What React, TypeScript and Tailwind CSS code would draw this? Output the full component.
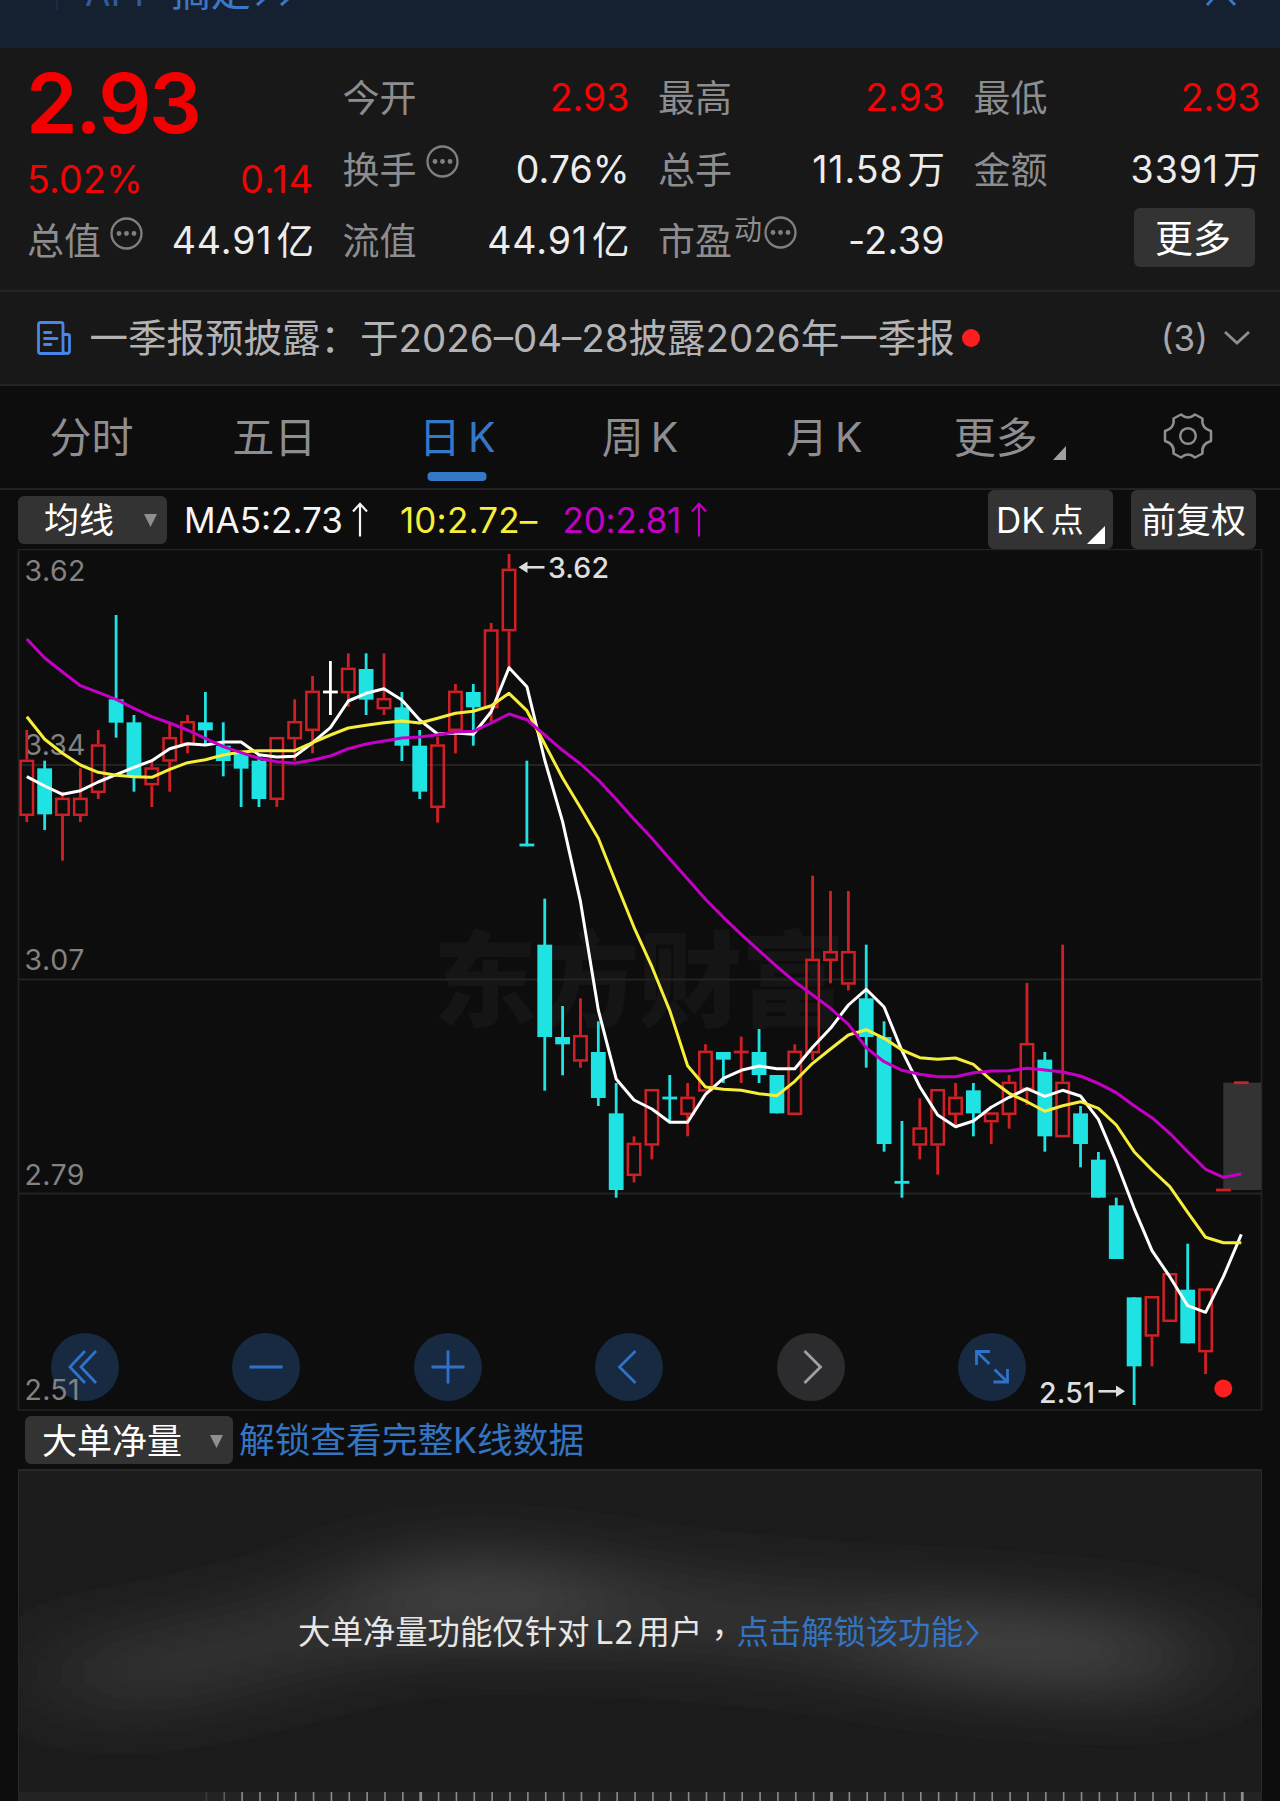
import type { ReactNode } from "react";

type Kind = "R" | "C" | "W";
/** kind, high, body top, body bottom, low (chart y units) */
type Candle = [Kind, number, number, number, number];

const STEP = 17.86;
const X0 = 26.8;
const px = (i: number) => X0 + STEP * i;

const scale = (base: number, rows: Candle[]): Candle[] =>
  rows.map(([k, h, t, b, l]) => [k, base + h / 3, base + t / 3, base + b / 3, base + l / 3]);

const candles: Candle[] = [
  ...scale(540, [
    ["R", 570, 659, 828, 846], ["C", 662, 685, 823, 870], ["R", 755, 773, 828, 962], ["R", 685, 773, 828, 846],
    ["R", 570, 613, 759, 777], ["C", 225, 478, 548, 593], ["C", 525, 547, 708, 755], ["R", 665, 682, 736, 801],
    ["R", 548, 591, 665, 755], ["R", 525, 543, 615, 640], ["C", 456, 547, 571, 615], ["C", 547, 617, 663, 709],
    ["C", 640, 640, 686, 801], ["C", 640, 662, 777, 801], ["R", 591, 591, 780, 801], ["R", 478, 543, 598, 662],
    ["R", 408, 452, 573, 640], ["W", 363, 456, 456, 525], ["R", 340, 383, 460, 500], ["C", 340, 387, 479, 525],
    ["R", 340, 474, 508, 525], ["C", 456, 502, 617, 663], ["C", 570, 617, 755, 777], ["R", 590, 613, 804, 848],
    ["R", 432, 452, 573, 640], ["C", 432, 456, 502, 617], ["R", 249, 268, 505, 545], ["R", 42, 86, 274, 385],
    ["C", 662, 915, 915, 919],
  ]),
  ...scale(860, [
    ["C", 116, 254, 531, 692], ["C", 438, 531, 553, 646], ["R", 415, 525, 605, 623], ["C", 484, 576, 714, 738],
    ["C", 669, 760, 990, 1013], ["R", 829, 848, 948, 967], ["R", 687, 687, 857, 898], ["C", 645, 714, 714, 785],
    ["R", 669, 710, 765, 829], ["R", 553, 572, 695, 695], ["C", 576, 576, 599, 669], ["R", 530, 576, 576, 669],
    ["C", 507, 576, 645, 669], ["C", 645, 645, 760, 760], ["R", 553, 572, 765, 765], ["R", 47, 296, 580, 600],
    ["R", 93, 273, 303, 370], ["R", 93, 273, 374, 391], ["C", 254, 415, 531, 623], ["C", 484, 531, 852, 875],
    ["C", 783, 967, 967, 1013], ["R", 715, 802, 857, 898], ["R", 687, 687, 857, 944], ["R", 669, 710, 765, 800],
    ["C", 669, 691, 760, 829], ["R", 757, 757, 787, 852], ["R", 645, 665, 765, 806], ["R", 369, 549, 690, 735],
    ["C", 576, 599, 829, 875], ["R", 254, 665, 832, 832], ["C", 738, 760, 852, 922], ["C", 876, 899, 1013, 1013],
  ]),
  ...scale(1160, [
    ["C", 113, 136, 297, 297], ["C", 412, 412, 619, 735], ["R", 408, 408, 530, 619], ["R", 339, 339, 486, 486],
    ["C", 251, 389, 550, 550], ["R", 385, 385, 577, 642], ["R", 90, 90, 90, 90], ["R", -232, -232, -232, -232],
  ]),
];

const line = (parts: [number, number[]][]) =>
  parts
    .flatMap(([base, ys]) => ys.map((y) => base + y / 3))
    .map((y, i) => `${px(i).toFixed(1)},${y.toFixed(1)}`)
    .join(" ");

const ma5 = line([
  [540, [710, 738, 763, 752, 726, 704, 682, 662, 626, 611, 615, 606, 606, 644, 651, 649, 608, 563, 483, 460, 446, 480, 540, 582, 579, 583, 515, 383, 440, 660, 845, 1085]],
  [860, [450, 657, 720, 747, 787, 787, 703, 655, 631, 618, 626, 626, 562, 505, 435, 388, 441, 572, 680, 765, 800, 783, 742, 712, 686, 709, 691, 708, 778, 905, 1045]],
  [1160, [272, 350, 437, 457, 350, 223]],
]);
const ma10 = line([
  [540, [530, 598, 640, 675, 697, 706, 710, 712, 688, 668, 659, 645, 636, 632, 632, 632, 608, 585, 564, 556, 548, 543, 549, 535, 520, 514, 497, 460, 512, 612, 714, 803, 895, 1030]],
  [860, [202, 320, 452, 617, 681, 688, 691, 701, 707, 664, 610, 567, 525, 509, 535, 570, 593, 598, 594, 613, 660, 700, 725, 754, 737, 725, 745, 795, 875, 930, 980]],
  [1160, [157, 232, 248, 248]],
]);
const ma20 = line([
  [540, [297, 354, 396, 437, 457, 478, 505, 530, 549, 570, 595, 620, 638, 655, 665, 670, 660, 648, 626, 612, 603, 594, 591, 584, 576, 574, 549, 522, 539, 585, 631, 672, 720, 778, 838, 895, 957, 1017, 1078, 1132]],
  [860, [223, 272, 320, 365, 405, 445, 493, 563, 605, 631, 643, 650, 650, 638, 633, 632, 625, 630, 636, 648, 670, 698, 737, 773, 820, 875, 928, 952, 942]],
]);

const COLORS: Record<Kind, string> = { R: "#cf2025", C: "#1fe2e2", W: "#ffffff" };

function CandleShape({ c, i }: { c: Candle; i: number }) {
  const [k, h, t, b, l] = c;
  const x = px(i);
  const color = COLORS[k];
  if (t === b) {
    return (
      <g fill={color}>
        <rect x={x - 1.4} y={h} width={2.8} height={l - h} />
        <rect x={x - 7.4} y={t - 1.4} width={14.8} height={2.8} />
      </g>
    );
  }
  if (k === "C") {
    return (
      <g fill={color}>
        <rect x={x - 1.4} y={h} width={2.8} height={l - h} />
        <rect x={x - 7.4} y={t} width={14.8} height={b - t} />
      </g>
    );
  }
  return (
    <g fill={color}>
      <rect x={x - 1.4} y={h} width={2.8} height={t - h} />
      <rect x={x - 1.4} y={b} width={2.8} height={l - b} />
      <rect x={x - 6.2} y={t + 1.2} width={12.4} height={b - t - 2.4} fill="none" stroke={color} strokeWidth={2.5} />
    </g>
  );
}

function MoreDots() {
  return (
    <svg width="33" height="33" viewBox="0 0 33 33" fill="#808080" className="shrink-0">
      <circle cx="16.5" cy="16.5" r="15" fill="none" stroke="#808080" strokeWidth="2.3" />
      <circle cx="9" cy="16.5" r="2.4" />
      <circle cx="16.5" cy="16.5" r="2.4" />
      <circle cx="24" cy="16.5" r="2.4" />
    </svg>
  );
}

function Stat({ label, value, red, extra }: { label: string; value: ReactNode; red?: boolean; extra?: ReactNode }) {
  return (
    <div className="flex h-[71.5px] items-center justify-between">
      <div className="-ml-px flex items-center pt-[2px] text-[37px] text-[#8d8d8f]">
        {label}
        {extra}
      </div>
      <div className={red ? "text-[37.5px] text-[#ee0505]" : "flex text-[37.5px] text-[#ececec]"}>{value}</div>
    </div>
  );
}

function Amount({ n, unit }: { n: string; unit: string }) {
  return (
    <>
      <span className="tracking-[0.9px]">{n}</span>
      <span className="ml-[4px]">{unit}</span>
    </>
  );
}

function Down() {
  return (
    <svg width="13" height="13" viewBox="0 0 13 13">
      <path d="M0 0H13L6.5 13Z" fill="#8e8e93" />
    </svg>
  );
}

function Up({ color }: { color: string }) {
  return (
    <svg width="16" height="35" viewBox="0 0 16 35" fill="none" stroke={color} strokeWidth="2.2">
      <path d="M8 34.500V2M1 9.500L8 1.800L15 9.500" />
    </svg>
  );
}

function RoundButton({ children, gray }: { children: ReactNode; gray?: boolean }) {
  return (
    <div
      className={
        gray
          ? "flex h-[68px] w-[68px] items-center justify-center rounded-full bg-[#2c2c2e]"
          : "flex h-[68px] w-[68px] items-center justify-center rounded-full bg-[#182a42]"
      }
    >
      <svg width="68" height="68" viewBox="0 0 68 68" fill="none" stroke={gray ? "#a0a0a0" : "#2e73c9"} strokeWidth="2.8">
        {children}
      </svg>
    </div>
  );
}

function Tab({ children, active }: { children: ReactNode; active?: boolean }) {
  return (
    <div
      className={
        active
          ? "relative flex flex-1 items-center justify-center gap-[7px] pt-[1px] text-[42px] text-[#3478c6]"
          : "relative flex flex-1 items-center justify-center gap-[7px] pt-[1px] text-[42px] text-[#8e8e90]"
      }
    >
      {children}
      {active && <div className="absolute bottom-[7px] left-1/2 h-[9px] w-[59px] -translate-x-1/2 rounded-[4px] bg-[#3478c6]" />}
    </div>
  );
}

function Chart() {
  return (
    <div className="relative h-[862px]">
      <svg width="1280" height="862" viewBox="0 549 1280 862" className="block">
        <text x="433" y="1019" fontSize="104" fontWeight="900" fill="#151515" textLength="412">
          东方财富
        </text>
        <g stroke="#232323" strokeWidth="2">
          <path d="M18.500 549.500V1410H1261.500V549.500Z" fill="none" strokeWidth="1.600" />
          <path d="M18 765H1261M18 979.500H1261M18 1193.500H1261" />
        </g>
        <g fill="#828282" fontSize="28.500">
          <text x="24.500" y="581" textLength="61">3.62</text>
          <text x="24.500" y="754.500" textLength="61">3.34</text>
          <text x="24.500" y="969.500" textLength="60">3.07</text>
          <text x="24.500" y="1184.500" textLength="60">2.79</text>
        </g>
        <rect x="1223.300" y="1082.700" width="38" height="107.300" fill="#333333" />
        {candles.map((c, i) => (
          <CandleShape key={i} c={c} i={i} />
        ))}
        <g fill="none" strokeWidth="3" strokeLinejoin="round">
          <polyline points={ma5} stroke="#ffffff" />
          <polyline points={ma10} stroke="#f7ee3c" />
          <polyline points={ma20} stroke="#c400c4" />
        </g>
        <g fill="#dedede" fontSize="28.500" fontWeight="500">
          <path d="M518.500 567.300L527.500 561.500V573Z" />
          <rect x="526" y="566" width="18.500" height="2.600" />
          <text x="548" y="578" textLength="61">3.62</text>
          <text x="1039" y="1402.500" textLength="56">2.51</text>
          <rect x="1098.500" y="1390" width="18.500" height="2.600" />
          <path d="M1125 1391.300L1116 1385.500V1397Z" />
        </g>
        <circle cx="1223.300" cy="1388.500" r="9" fill="#fb1f1f" />
      </svg>
      <div className="absolute left-[50.5px] top-[783.5px] flex gap-[113.5px]">
        <RoundButton>
          <path d="M34 18L19 34L34 50M45 18L30 34L45 50" />
        </RoundButton>
        <RoundButton>
          <path d="M17.500 34H50.500" />
        </RoundButton>
        <RoundButton>
          <path d="M17.500 34H50.500M34 17.500V50.500" />
        </RoundButton>
        <RoundButton>
          <path d="M40.500 18L24.500 34L40.500 50" />
        </RoundButton>
        <RoundButton gray>
          <path d="M27.500 18L43.500 34L27.500 50" />
        </RoundButton>
        <RoundButton>
          <path d="M18.500 32V18.500H32M18.500 18.500L31.500 31M49.500 36V49H35.500M49.500 49L36.500 36.500" />
        </RoundButton>
      </div>
      <div className="absolute left-[24.5px] top-[821px] text-[28.5px] leading-[40px] tracking-[0.3px] text-[#828282]">2.51</div>
    </div>
  );
}

export default function App() {
  return (
    <div className="flex h-[1801px] w-[1280px] flex-col overflow-hidden whitespace-nowrap bg-[#0d0d0d] font-['Inter','Noto_Sans_CJK_SC',sans-serif] leading-none">
      <div className="h-[48px] shrink-0 overflow-hidden bg-[#152130]">
        <div className="-mt-[34px] flex h-[48px] items-center text-[#3b78c8]">
          <div className="ml-[56px] h-[44px] w-[2px] self-start bg-[#1b2c42]" />
          <span className="ml-[27px] pt-[4px] text-[37px] text-[#2d5d9c]">APP</span>
          <span className="ml-[13px] pt-[3px] text-[40px]">搞定</span>
          <svg width="46" height="30" viewBox="0 0 46 30" fill="none" stroke="currentColor" strokeWidth="3" className="ml-[3px] mt-[4px]">
            <path d="M3 2L18 15L3 28M27 2L42 15L27 28" />
          </svg>
          <svg width="32" height="36" viewBox="0 0 32 36" fill="none" stroke="currentColor" strokeWidth="2.800" className="-mt-[1px] ml-auto mr-[43px]">
            <path d="M2 3L30 33M30 3L2 33" />
          </svg>
        </div>
      </div>

      <div className="flex h-[242px] shrink-0 gap-[29.5px] bg-[#181818] pl-[28px] pt-[14px]">
        <div className="w-[286px]">
          <div className="-ml-[2px] flex h-[82px] items-center text-[83px] font-semibold tracking-[-2.5px] text-[#f40000]">2.93</div>
          <div className="-ml-px flex h-[61px] items-center justify-between pt-[11px] text-[37.5px] text-[#ee0505]">
            <span className="tracking-[0.2px]">5.02%</span>
            <span className="tracking-[1px]">0.14</span>
          </div>
          <Stat label="总值" value={<Amount n="44.91" unit="亿" />} extra={<div className="mb-[16px] ml-[9px]"><MoreDots /></div>} />
        </div>
        <div className="w-[286px]">
          <Stat label="今开" value="2.93" red />
          <Stat label="换手" value="0.76%" extra={<div className="mb-[18px] ml-[9px]"><MoreDots /></div>} />
          <Stat label="流值" value={<Amount n="44.91" unit="亿" />} />
        </div>
        <div className="w-[286px]">
          <Stat label="最高" value="2.93" red />
          <Stat label="总手" value={<Amount n="11.58" unit="万" />} />
          <Stat
            label="市盈"
            value={<span className="tracking-[0.4px]">-2.39</span>}
            extra={
              <div className="mb-[18px] ml-[2px] flex items-center gap-[2px]">
                <span className="mb-[5px] text-[28px]">动</span>
                <MoreDots />
              </div>
            }
          />
        </div>
        <div className="w-[286px]">
          <Stat label="最低" value="2.93" red />
          <Stat label="金额" value={<Amount n="3391" unit="万" />} />
          <div className="ml-[159px] mt-[3px] flex h-[59px] w-[121px] items-center justify-center rounded-[6px] bg-[#333333] pr-[2px] text-[38px] text-white">更多</div>
        </div>
      </div>

      <div className="flex h-[96px] shrink-0 items-center border-y-2 border-[#242424] bg-[#181818] pl-[37px]">
        <svg width="34" height="34" viewBox="0 0 34 34" fill="none" stroke="#4a86ea" strokeWidth="2.800" strokeLinejoin="round" strokeLinecap="round">
          <path d="M27 32.500H3.500Q1.500 32.500 1.500 30.500V3.500Q1.500 1.500 3.500 1.500H24Q26 1.500 26 3.500V30M26 13.500H31Q32.500 13.500 32.500 15V30Q32.500 32.500 29.500 32.500Q26 32.500 26 29.500M7.500 11.500H14M7.500 17.500H20M7.500 23.500H14" />
        </svg>
        <span className="ml-[18.500px] text-[38.500px] text-[#b3b3b5]">一季报预披露：</span>
        <span className="ml-[1px] text-[38.500px] text-[#b3b3b5]">于2026–04–28披露2026年一季报</span>
        <div className="ml-[7px] h-[18px] w-[18px] rounded-full bg-[#fb1f1f]" />
        <span className="ml-auto text-[35px] text-[#a8a8aa]">(3)</span>
        <svg width="26" height="14" viewBox="0 0 26 14" fill="none" stroke="#8e8e90" strokeWidth="2.800" className="ml-[16px] mr-[30px]">
          <path d="M1 1L13 12L25 1" />
        </svg>
      </div>

      <div className="flex h-[104px] shrink-0 border-b-2 border-[#222222]">
        <Tab>分时</Tab>
        <Tab>五日</Tab>
        <Tab active>
          <span>日</span>
          <span className="text-[41px]">K</span>
        </Tab>
        <Tab>
          <span>周</span>
          <span className="text-[41px]">K</span>
        </Tab>
        <Tab>
          <span className="ml-[3px]">月</span>
          <span className="text-[41px]">K</span>
        </Tab>
        <Tab>
          <span className="ml-[8px]">更多</span>
          <svg width="13" height="14" viewBox="0 0 13 14" className="ml-[8px] mt-[31px]">
            <path d="M13 0V14H0Z" fill="#a0a0a0" />
          </svg>
        </Tab>
        <Tab>
          <svg width="50" height="48" viewBox="0 0 50 48" fill="none" stroke="#8e8e90" strokeWidth="2.500" strokeLinejoin="round" className="-mt-[3px] mr-[1px]">
            <path d="M18 2.500Q25 8.500 32 2.500L39.500 6.500C38.500 13 41 17 48 19V29C41 31 38.500 35 39.500 41.500L32 45.500Q25 39.500 18 45.500L10.500 41.500C11.500 35 9 31 2 29V19C9 17 11.500 13 10.500 6.500Z" />
            <circle cx="25" cy="24" r="7.800" />
          </svg>
        </Tab>
      </div>

      <div className="flex h-[59px] shrink-0 items-center pl-[18px] pr-[24px]">
        <div className="flex h-[48px] w-[149px] items-center justify-between rounded-[6px] bg-[#333333] pl-[26px] pr-[10px] pt-[1px] text-[35px] text-white">
          均线
          <Down />
        </div>
        <span className="ml-[17px] mt-[2px] text-[35px] text-[#f5f5f5]">MA5:2.73</span>
        <div className="ml-[9px]"><Up color="#f5f5f5" /></div>
        <span className="ml-[32px] mt-[2px] text-[35px] tracking-[0.2px] text-[#f7ee3c]">10:2.72–</span>
        <span className="ml-[25px] mt-[2px] text-[35px] tracking-[-0.2px] text-[#c400c4]">20:2.81</span>
        <div className="ml-[10px]"><Up color="#c400c4" /></div>
        <div className="relative ml-auto flex h-[59px] w-[125px] items-center rounded-[6px] bg-[#333333] pl-[8px] pt-[2px] text-[35px] text-white">
          DK<span className="ml-[6px] text-[33px]">点</span>
          <svg width="18" height="18" viewBox="0 0 18 18" className="absolute bottom-[5px] right-[8px]">
            <path d="M18 0V18H0Z" fill="white" />
          </svg>
        </div>
        <div className="ml-[18px] flex h-[59px] w-[125px] items-center justify-center rounded-[6px] bg-[#333333] pt-[2px] text-[35px] text-white">前复权</div>
      </div>

      <Chart />

      <div className="flex h-[58px] shrink-0 items-center pl-[25px]">
        <div className="flex h-[48px] w-[208px] items-center justify-between rounded-[6px] bg-[#333333] pl-[17px] pr-[10px] pt-[2px] text-[35px] text-white">
          大单净量
          <Down />
        </div>
        <span className="mt-[2px] ml-[6px] text-[35.700px] text-[#3474c0]">解锁查看完整K线数据</span>
      </div>

      <div className="relative mx-[18px] flex flex-1 flex-col overflow-hidden border-x border-t-2 border-[#272727] bg-[#1c1c1c]">
        <svg width="1244" height="332" viewBox="18 1469 1244 332" className="absolute left-0 top-0">
          <defs>
            <filter id="glow" x="-40%" y="-200%" width="180%" height="500%">
              <feGaussianBlur stdDeviation="60 36" />
            </filter>
          </defs>
          <g filter="url(#glow)" fill="none">
            <path d="M60 1676C260 1664 340 1600 480 1600S800 1628 1200 1658" stroke="#414141" strokeWidth="52" />
            <path d="M380 1600Q480 1582 590 1604M900 1636L1140 1656" stroke="#5a5a5a" strokeWidth="48" />
          </g>
        </svg>
        <div className="relative flex flex-1 items-center pl-[279px] pt-[3px] text-[32.400px] text-[#e6e6e6]">
          <span>大单净量功能仅针对</span>
          <span className="ml-[6px]">L2</span>
          <span className="ml-[4px]">用户</span>
          <span className="w-[34px] text-center font-['Noto_Sans_CJK_TC']">，</span>
          <span className="text-[#3474c0]">点击解锁该功能</span>
          <svg width="14" height="28" viewBox="0 0 14 28" fill="none" stroke="#2e74c8" strokeWidth="2.600" className="ml-[2px]">
            <path d="M2 2L12 14L2 26" />
          </svg>
        </div>
        <svg width="1244" height="9" viewBox="18 1792 1244 9" className="relative block shrink-0">
          <rect x="18" y="1792" width="1244" height="9" fill="#232325" />
          {Array.from({ length: 59 }, (_, n) => n + 10).map((i) => (
            <rect
              key={i}
              x={px(i) - (i % 23 === 22 ? 1.4 : 0.8)}
              y="1792"
              width={i % 23 === 22 ? 2.8 : 1.6}
              height="9"
              fill={i === 10 ? "#3a3a3a" : i === 11 ? "#5c5c5c" : "#8c8c8c"}
            />
          ))}
        </svg>
      </div>
    </div>
  );
}
